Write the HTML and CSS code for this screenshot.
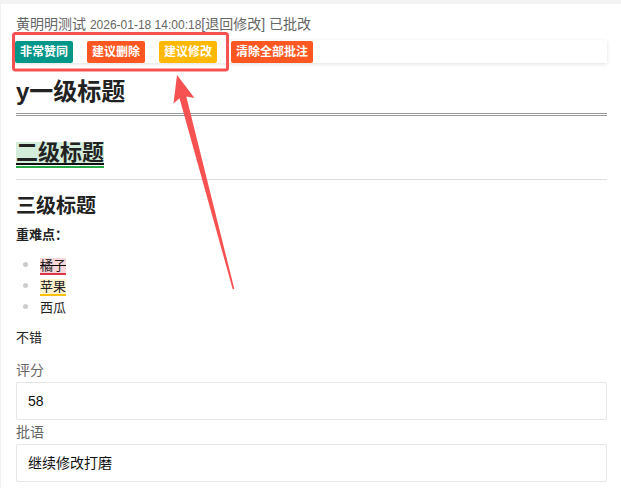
FILE: index.html
```html
<!DOCTYPE html>
<html lang="zh-CN">
<head>
    <meta charset="UTF-8">
    <meta name="viewport" content="width=device-width, initial-scale=1.0">
    <title>作业批改</title>
    <link rel="stylesheet" href="styles.css">
</head>
<body>
    <div class="paper">
        <div class="meta">
            黄明明测试 <span class="meta-time">2026-01-18 14:00:18</span>[退回修改] 已批改
        </div>

        <div class="toolbar">
            <button class="btn btn-agree">非常赞同</button>
            <button class="btn btn-del">建议删除</button>
            <button class="btn btn-edit">建议修改</button>
            <button class="btn btn-del">清除全部批注</button>
        </div>

        <div class="article">
            <h1>y一级标题</h1>
            <h2><span class="mark mark-agree">二级标题</span></h2>
            <h3>三级标题</h3>
            <p class="key"><strong>重难点：</strong></p>
            <ul class="points">
                <li><span class="mark mark-del">橘子</span></li>
                <li><span class="mark mark-edit">苹果</span></li>
                <li>西瓜</li>
            </ul>
            <p class="note">不错</p>
        </div>

        <div class="form">
            <div class="field">
                <label class="field-label">评分</label>
                <div class="field-box">58</div>
            </div>
            <div class="field">
                <label class="field-label">批语</label>
                <div class="field-box">继续修改打磨</div>
            </div>
        </div>
    </div>

    <!-- red callout drawn over the toolbar -->
    <svg class="callout" width="621" height="488" viewBox="0 0 621 488">
        <rect x="13.5" y="33.5" width="214" height="36.5" rx="2" fill="none" stroke="#f65252" stroke-width="3"/>
        <polygon fill="#f65252" points="177,75 194.5,98 186.3,96.4 234.3,288.8 232.7,289.2 179.5,98.2 173.5,103.5"/>
    </svg>
</body>
</html>
```

FILE: styles.css
```css
* {
    box-sizing: border-box;
}

body {
    margin: 0;
    background: #f2f2f2;
    font-family: 'Liberation Sans', 'Noto Sans CJK SC', sans-serif;
    color: #333;
    position: relative;
    min-height: 488px;
}

.paper {
    margin: 4px 0 0 1px;
    min-height: 484px;
    background: #fff;
    padding: 10px 14px 0 15px;
}

.meta {
    font-size: 14px;
    line-height: 21px;
    color: #666;
}

.meta-time {
    font-size: 12px;
}

.toolbar {
    display: flex;
    gap: 14px;
    height: 23px;
    margin: 4px 0 0 -1px;
    padding-top: 1px;
    background: #fff;
    box-shadow: 0 1px 4px rgba(0, 0, 0, 0.12);
}

.btn {
    height: 22px;
    line-height: 22px;
    padding: 0 5px;
    border: none;
    border-radius: 2px;
    font-family: inherit;
    font-size: 12px;
    font-weight: bold;
    color: #fff;
    cursor: pointer;
}

.btn-agree {
    background: #009688;
}

.btn-del {
    background: #ff5722;
}

.btn-edit {
    background: #ffb800;
}

.article {
    color: #222;
}

h1 {
    margin: 13px 0 0;
    font-size: 24px;
    line-height: 32px;
    padding-bottom: 5px;
    border-bottom: 3px double #999;
}

h2 {
    display: flex;
    margin: 26px 0 0;
    font-size: 22px;
    line-height: 21px;
    padding-bottom: 14px;
    border-bottom: 1px solid #ddd;
}

h3 {
    margin: 12px 0 0;
    font-size: 20px;
    line-height: 28px;
}

.key {
    margin: 5px 0 0;
    font-size: 13px;
    line-height: 20px;
}

.points {
    list-style: none;
    margin: 10px 0 0;
    padding-left: 7px;
    font-size: 13px;
}

.points li {
    line-height: 21px;
}

.points li::before {
    content: '';
    display: inline-block;
    width: 5px;
    height: 5px;
    margin-right: 12px;
    border-radius: 50%;
    background: #ccc;
    vertical-align: 3px;
}

.mark {
    display: inline-block;
}

.mark-agree {
    background: #d4eddb;
    border-bottom: 2px solid #111;
    box-shadow: 0 1px 0 #fff, 0 3px 0 #28a745;
}

.mark-del,
.mark-edit {
    line-height: 15px;
    vertical-align: top;
    margin-top: 3px;
}

.mark-del {
    background: #f8d7da;
    border-bottom: 2px solid #dc3545;
    text-decoration: line-through #000;
}

.mark-edit {
    background: #fff3cd;
    border-bottom: 2px solid #ffc107;
}

.note {
    margin: 10px 0 0;
    font-size: 13px;
    line-height: 20px;
}

.form {
    margin-top: 11px;
}

.field + .field {
    margin-top: 1px;
}

.field-label {
    display: block;
    font-size: 14px;
    line-height: 22px;
    color: #666;
    margin-bottom: 1px;
}

.field-box {
    height: 38px;
    line-height: 36px;
    padding-left: 11px;
    border: 1px solid #e6e6e6;
    border-radius: 2px;
    font-size: 14px;
    color: #111;
}

.callout {
    position: absolute;
    top: 0;
    left: 0;
    pointer-events: none;
}
```
